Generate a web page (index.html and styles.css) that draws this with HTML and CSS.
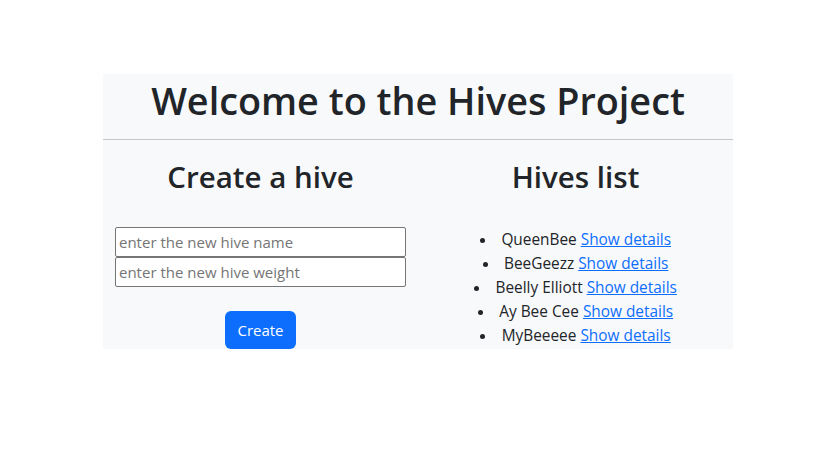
FILE: index.html
```html
<!DOCTYPE html>
<html lang="en">
<head>
<meta charset="utf-8">
<title>Hives Project</title>
<link rel="stylesheet" href="styles.css">
</head>
<body>
<main class="panel">
  <header class="header">
    <h1 class="title">Welcome to the Hives Project</h1>
  </header>
  <div class="columns">
    <section class="col">
      <h2 class="heading">Create a hive</h2>
      <form class="form">
        <input class="field" type="text" placeholder="enter the new hive name">
        <input class="field" type="text" placeholder="enter the new hive weight">
        <button class="btn" type="button">Create</button>
      </form>
    </section>
    <section class="col">
      <h2 class="heading">Hives list</h2>
      <ul class="list">
        <li>QueenBee <a href="#">Show details</a></li>
        <li>BeeGeezz <a href="#">Show details</a></li>
        <li>Beelly Elliott <a href="#">Show details</a></li>
        <li>Ay Bee Cee <a href="#">Show details</a></li>
        <li>MyBeeeee <a href="#">Show details</a></li>
      </ul>
    </section>
  </div>
</main>
</body>
</html>
```
FILE: styles.css
```css
* { box-sizing: border-box; }
body {
  margin: 0;
  background: #fff;
  font-family: "Open Sans", "Noto Sans", sans-serif;
  color: #212529;
  font-size: 15px;
  line-height: 24px;
}
.panel {
  width: 630px;
  margin: 74px 0 0 103px;
  background: #f8f9fa;
}
.header {
  border-bottom: 1px solid #c5c6c7;
  text-align: center;
  padding: 3px 0 14px;
}
.title {
  margin: 0;
  font-size: 37.8px;
  font-weight: 600;
  line-height: 48px;
}
.columns {
  display: flex;
}
.col {
  flex: 1 1 0;
  padding: 18px 12px 0;
  text-align: center;
}
.heading {
  margin: 0;
  font-size: 29.5px;
  font-weight: 600;
  line-height: 38px;
  height: 38px;
}
.form {
  margin-top: 31px;
  display: flex;
  flex-direction: column;
  align-items: center;
}
.field {
  width: 100%;
  height: 30px;
  margin: 0;
  padding: 1px 3px;
  border: 1px solid #767676;
  border-radius: 2px;
  font-family: inherit;
  font-size: 15px;
  color: #212529;
  background: #fff;
}
.field::placeholder { color: #757575; }
.btn {
  margin-top: 24px;
  height: 38px;
  padding: 6px 12px;
  border: 0;
  border-radius: 6px;
  background: #0d6efd;
  color: #fff;
  font-family: inherit;
  font-size: 15px;
  line-height: 24px;
}
.list {
  margin: 32px 0 0;
  padding: 0;
  list-style-position: inside;
  font-size: 15.4px;
}
.list a {
  color: #0d6efd;
  text-decoration: underline;
}
```
